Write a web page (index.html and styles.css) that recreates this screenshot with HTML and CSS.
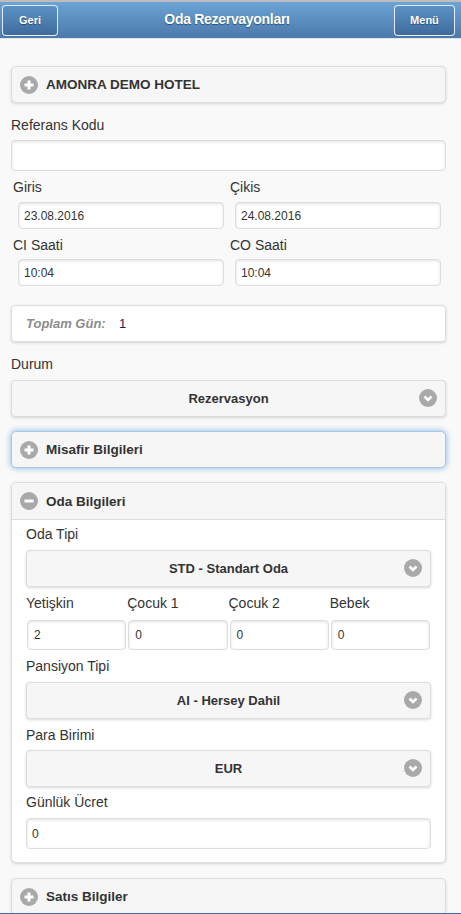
FILE: index.html
```html
<!DOCTYPE html>
<html lang="tr">
<head>
<meta charset="utf-8">
<title>Oda Rezervayonları</title>
<link rel="stylesheet" href="styles.css">
</head>
<body>
<header class="topbar">
  <a class="hbtn hbtn-left">Geri</a>
  <h1 class="title">Oda Rezervayonları</h1>
  <a class="hbtn hbtn-right">Menü</a>
</header>
<main class="content">
  <div class="coll-head first">
    <svg class="ico" viewBox="0 0 18 18"><circle cx="9" cy="9" r="9"/><path d="M9 4.5v9M4.5 9h9"/></svg>
    <span class="caps">AMONRA DEMO HOTEL</span>
  </div>

  <label class="lbl lbl-ref">Referans Kodu</label>
  <div class="inp inp-big"></div>

  <div class="pair">
    <div class="cell">
      <label class="lbl lbl-g">Giris</label>
      <div class="inp inp-sm">23.08.2016</div>
    </div>
    <div class="cell">
      <label class="lbl lbl-g">Çikis</label>
      <div class="inp inp-sm">24.08.2016</div>
    </div>
    <div class="cell">
      <label class="lbl lbl-g2">CI Saati</label>
      <div class="inp inp-sm inp-sm2">10:04</div>
    </div>
    <div class="cell">
      <label class="lbl lbl-g2">CO Saati</label>
      <div class="inp inp-sm inp-sm2">10:04</div>
    </div>
  </div>

  <div class="total"><span class="total-k">Toplam Gün:</span><span class="total-v">1</span></div>

  <label class="lbl lbl-durum">Durum</label>
  <div class="sel sel-durum">Rezervasyon
    <svg class="arrow" viewBox="0 0 18 18"><circle cx="9" cy="9" r="9"/><path d="M5.5 7.5l3.5 3.5 3.5-3.5"/></svg>
  </div>

  <div class="coll-head focus">
    <svg class="ico" viewBox="0 0 18 18"><circle cx="9" cy="9" r="9"/><path d="M9 4.5v9M4.5 9h9"/></svg>
    <span>Misafir Bilgileri</span>
  </div>

  <section class="coll-open">
    <div class="coll-head inner">
      <svg class="ico" viewBox="0 0 18 18"><circle cx="9" cy="9" r="9"/><path d="M4.5 9h9"/></svg>
      <span>Oda Bilgileri</span>
    </div>
    <div class="coll-body">
      <label class="lbl lbl-first">Oda Tipi</label>
      <div class="sel">STD - Standart Oda
        <svg class="arrow" viewBox="0 0 18 18"><circle cx="9" cy="9" r="9"/><path d="M5.5 7.5l3.5 3.5 3.5-3.5"/></svg>
      </div>
      <div class="quad">
        <label class="lbl lbl-q">Yetişkin</label>
        <label class="lbl lbl-q">Çocuk 1</label>
        <label class="lbl lbl-q">Çocuk 2</label>
        <label class="lbl lbl-q">Bebek</label>
        <div class="inp inp-q">2</div>
        <div class="inp inp-q">0</div>
        <div class="inp inp-q">0</div>
        <div class="inp inp-q">0</div>
      </div>
      <label class="lbl lbl-pans">Pansiyon Tipi</label>
      <div class="sel">AI - Hersey Dahil
        <svg class="arrow" viewBox="0 0 18 18"><circle cx="9" cy="9" r="9"/><path d="M5.5 7.5l3.5 3.5 3.5-3.5"/></svg>
      </div>
      <label class="lbl lbl-para">Para Birimi</label>
      <div class="sel sel-para">EUR
        <svg class="arrow" viewBox="0 0 18 18"><circle cx="9" cy="9" r="9"/><path d="M5.5 7.5l3.5 3.5 3.5-3.5"/></svg>
      </div>
      <label class="lbl lbl-gun">Günlük Ücret</label>
      <div class="inp inp-gun">0</div>
    </div>
  </section>

  <div class="coll-head last">
    <svg class="ico" viewBox="0 0 18 18"><circle cx="9" cy="9" r="9"/><path d="M9 4.5v9M4.5 9h9"/></svg>
    <span>Satıs Bilgiler</span>
  </div>
</main>
<footer class="footbar"></footer>
</body>
</html>
```

FILE: styles.css
```css
* { box-sizing: border-box; }
html, body { margin: 0; padding: 0; }
body {
  background: #f9f9f9;
  font-family: "Liberation Sans", Arial, sans-serif;
  color: #333;
  overflow: hidden;
  height: 914px;
}
.topbar {
  height: 39px;
  border-top: 2px solid #bdbdbd;
  border-bottom: 1px solid #e6e6e6;
  background: linear-gradient(#6ca4d5, #4b79ab);
  display: flex;
  align-items: center;
  justify-content: space-between;
  padding: 0 6px 0 2px;
}
.title {
  margin: 0;
  font-size: 14px;
  letter-spacing: -0.3px;
  font-weight: bold;
  color: #fff;
  text-shadow: 0 1px 1px #2c4f74;
  position: relative;
  left: 1px;
  top: -1px;
}
.hbtn {
  height: 31px;
  border: 1px solid rgba(255,255,255,0.85);
  border-radius: 4px;
  background: linear-gradient(#5b92c6, #3f6b9c);
  color: #fff;
  font-weight: bold;
  font-size: 11px;
  display: flex;
  align-items: center;
  justify-content: center;
  text-shadow: 0 1px 1px #2a4a6e;
}
.hbtn-left { width: 56px; }
.hbtn-right { width: 61px; }

.content { padding: 27px 15px 0 11px; }

.coll-head {
  height: 37px;
  background: #f6f6f6;
  border: 1px solid #dddddd;
  border-radius: 5px;
  box-shadow: 0 1px 3px rgba(0,0,0,0.15);
  display: flex;
  align-items: center;
  padding-left: 8px;
  font-weight: bold;
  font-size: 13.5px;
  color: #333;
}
.coll-head .caps { font-size: 13.5px; }
.coll-head .ico { margin-right: 8px; }
.ico, .arrow { width: 18px; height: 18px; flex: none; }
.ico circle, .arrow circle { fill: #a9a9a9; }
.ico path, .arrow path { stroke: #fff; stroke-width: 3px; fill: none; stroke-linecap: butt; }
.arrow path { stroke-width: 2.6px; stroke-linejoin: miter; }

.focus {
  margin-top: 14px;
  border-color: #a9c8e6;
  box-shadow: 0 0 6px #7fb2e5;
}

.lbl {
  display: block;
  font-size: 14px;
  line-height: 18px;
  height: 18px;
  color: #333;
}
.lbl-ref { margin-top: 13px; }

.inp {
  background: #fff;
  border: 1px solid #dddddd;
  border-radius: 4px;
  box-shadow: inset 0 1px 3px rgba(0,0,0,0.12);
  font-size: 12px;
  color: #333;
  display: flex;
  align-items: center;
  padding-left: 5px;
}
.inp-big { height: 31px; margin-top: 6px; }

.pair {
  display: grid;
  grid-template-columns: 217px 217px;
  padding-left: 2px;
}
.lbl-g { margin-top: 7px; }
.lbl-g2 { margin-top: 7px; }
.inp-sm { height: 27px; margin: 6px 6px 0 5px; }
.inp-sm2 { margin-top: 5px; }

.total {
  margin-top: 19px;
  height: 37px;
  background: #fff;
  border: 1px solid #dddddd;
  border-radius: 4px;
  box-shadow: 0 1px 3px rgba(0,0,0,0.15);
  display: flex;
  align-items: center;
  padding-left: 14px;
  font-size: 13px;
}
.total-k { font-style: italic; font-weight: bold; color: #8c8c8c; width: 93px; }
.total-v { color: #22224a; }

.lbl-durum { margin-top: 13px; }

.sel {
  position: relative;
  height: 37px;
  background: #f6f6f6;
  border: 1px solid #dddddd;
  border-radius: 4px;
  box-shadow: 0 1px 3px rgba(0,0,0,0.15);
  display: flex;
  align-items: center;
  justify-content: center;
  font-weight: bold;
  font-size: 13px;
  color: #333;
  margin-top: 7px;
}
.sel .arrow { position: absolute; right: 8px; top: 8px; }

.coll-open {
  margin-top: 14px;
  background: #fff;
  border: 1px solid #dddddd;
  border-radius: 5px;
  box-shadow: 0 1px 3px rgba(0,0,0,0.15);
  overflow: hidden;
}
.coll-head.inner {
  border: none;
  border-bottom: 1px solid #dddddd;
  border-radius: 0;
  box-shadow: none;
  height: 37px;
  padding-left: 8px;
}
.coll-body { padding: 5px 14px 13px 14px; }
.lbl-first { margin-top: 0; }

.quad {
  display: grid;
  grid-template-columns: repeat(4, 1fr);
  margin-top: 7px;
  row-gap: 8px;
}
.inp-q { height: 30px; margin: 0 1px; padding-left: 6px; }
.lbl-pans { margin-top: 7px; }
.lbl-para { margin-top: 7px; }
.sel-para { margin-top: 6px; }
.lbl-gun { margin-top: 6px; }
.inp-gun { height: 31px; margin-top: 7px; }

.last { margin-top: 15px; }

.footbar {
  position: fixed;
  left: 0;
  right: 0;
  top: 913px;
  height: 40px;
  background: #3d6fa6;
}
```
